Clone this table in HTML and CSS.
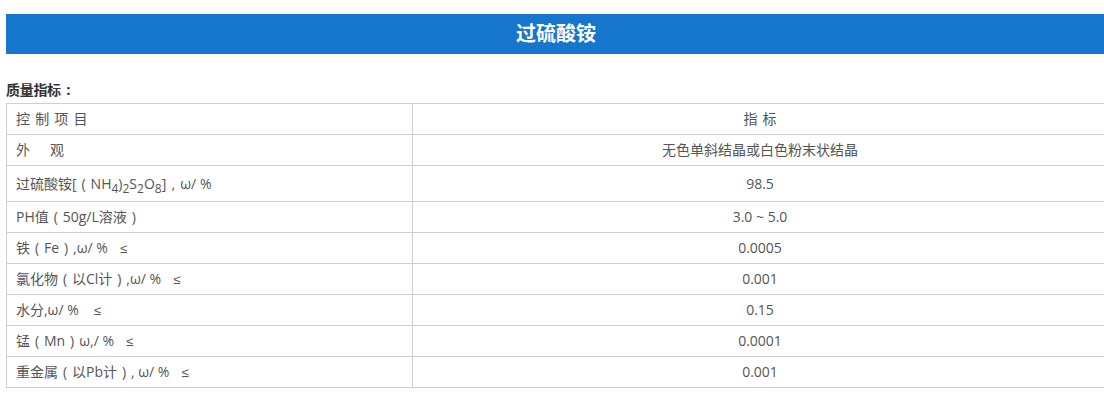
FILE: index.html
```html
<!DOCTYPE html>
<html lang="zh-CN">
<head>
<meta charset="utf-8">
<link rel="stylesheet" href="styles.css">
</head>
<body>
<div class="page">
  <h1 class="title">过硫酸铵</h1>
  <p class="label">质量指标<span class="colon">:</span></p>
  <table class="spec">
    <tr class="r"><td class="c1 spaced">控 制 项 目</td><td class="c2 spaced">指 标</td></tr>
    <tr class="r"><td class="c1">外<span class="gap"></span>观</td><td class="c2">无色单斜结晶或白色粉末状结晶</td></tr>
    <tr class="r tall"><td class="c1">过硫酸铵[<span class="fw">(</span>NH<sub>4</sub>)<sub>2</sub>S<sub>2</sub>O<sub>8</sub>]<span class="fw">,</span>ω/ %</td><td class="c2">98.5</td></tr>
    <tr class="r"><td class="c1">PH值<span class="fw">(</span>50g/L溶液<span class="fw">)</span></td><td class="c2">3.0 ~ 5.0</td></tr>
    <tr class="r"><td class="c1">铁<span class="fw">(</span>Fe<span class="fw">)</span>,ω/ %<span class="g2"></span><span class="le">≤</span></td><td class="c2">0.0005</td></tr>
    <tr class="r"><td class="c1">氯化物<span class="fw">(</span>以Cl计<span class="fw">)</span>,ω/ %<span class="g2"></span><span class="le">≤</span></td><td class="c2">0.001</td></tr>
    <tr class="r"><td class="c1">水分,ω/ %<span class="g3"></span><span class="le">≤</span></td><td class="c2">0.15</td></tr>
    <tr class="r"><td class="c1">锰<span class="fw">(</span>Mn<span class="fw">)</span>ω,/ %<span class="g2"></span><span class="le">≤</span></td><td class="c2">0.0001</td></tr>
    <tr class="r"><td class="c1">重金属<span class="fw">(</span>以Pb计<span class="fw">)</span>, ω/ %<span class="g2"></span><span class="le">≤</span></td><td class="c2">0.001</td></tr>
  </table>
</div>
</body>
</html>
```
FILE: styles.css
```css
html, body {
  margin: 0;
  padding: 0;
  background: #fff;
}
body {
  font-family: "Open Sans", "Noto Sans CJK SC", sans-serif;
  color: #555;
  font-size: 14px;
}
.page {
  width: 1100px;
  margin-left: 6px;
  padding-top: 14px;
}
.title {
  margin: 0;
  height: 40px;
  line-height: 40px;
  background: #1675cc;
  color: #fff;
  text-align: center;
  font-size: 20px;
  font-weight: bold;
}
.label {
  margin: 27px 0 0 0;
  height: 22px;
  line-height: 16px;
  font-size: 14px;
  font-weight: bold;
  color: #333;
  letter-spacing: -0.3px;
}
.label .colon {
  display: inline-block;
  width: 15px;
  text-align: center;
  font-size: 15px;
}
.spec {
  width: 1102px;
  border-collapse: collapse;
  table-layout: fixed;
}
.spec td {
  border: 1px solid #cfcfcf;
  padding: 0 9px;
  height: 30px;
  line-height: 20px;
  white-space: nowrap;
}
.spec .c1 {
  width: 387px;
  text-align: left;
}
.spec .c2 {
  text-align: center;
}
.spec .spaced {
  word-spacing: 1.5px;
}
.spec .gap {
  display: inline-block;
  width: 20px;
}
.spec .fw {
  display: inline-block;
  width: 14px;
  text-align: center;
}
.spec .g2 {
  display: inline-block;
  width: 12px;
}
.spec .g3 {
  display: inline-block;
  width: 15px;
}
.spec .le {
  font-family: "Liberation Sans", sans-serif;
  font-size: 13px;
}
.spec .tall td {
  height: 35px;
}
.spec sub {
  font-size: 12px;
  vertical-align: -4px;
  line-height: 0;
}
```
